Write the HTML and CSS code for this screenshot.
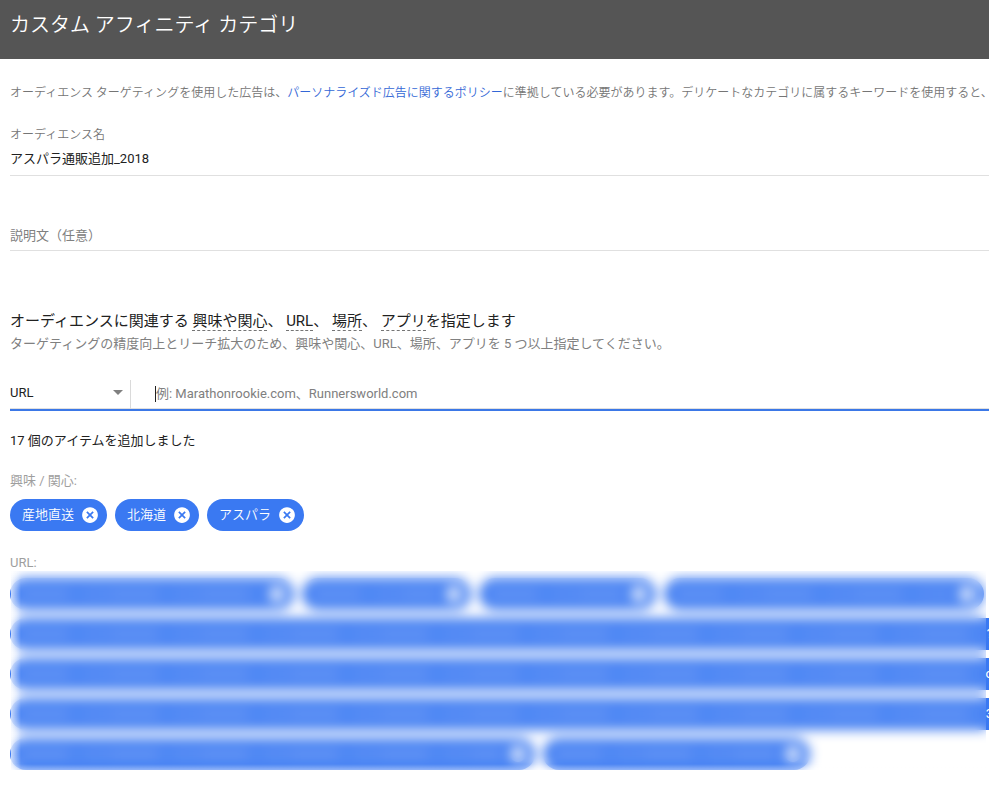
FILE: index.html
```html
<!DOCTYPE html>
<html lang="ja">
<head>
    <meta charset="UTF-8">
    <meta name="viewport" content="width=device-width, initial-scale=1.0">
    <title>カスタム アフィニティ カテゴリ</title>
    <link rel="stylesheet" href="styles.css">
</head>
<body>

    <svg class="defs" width="0" height="0" aria-hidden="true">
        <symbol id="icon-remove" viewBox="0 0 24 24">
            <path fill="currentColor" d="M12 1.5C6.2 1.5 1.5 6.2 1.5 12S6.2 22.5 12 22.5 22.5 17.8 22.5 12 17.8 1.5 12 1.5zm5 13.9L15.4 17 12 13.6 8.6 17 7 15.4 10.4 12 7 8.6 8.6 7 12 10.4 15.4 7 17 8.6 13.6 12z"/>
        </symbol>
    </svg>

    <header class="page-header">
        <h1>カスタム アフィニティ カテゴリ</h1>
    </header>

    <main>
        <p class="notice">オーディエンス ターゲティングを使用した広告は、<a href="#">パーソナライズド広告に関するポリシー</a>に準拠している必要があります。デリケートなカテゴリに属するキーワードを使用すると、</p>

        <form>
            <div class="field">
                <label for="audience-name">オーディエンス名</label>
                <input type="text" id="audience-name" value="アスパラ通販追加_2018">
            </div>

            <div class="field description">
                <input type="text" id="description" placeholder="説明文（任意）" aria-label="説明文（任意）">
            </div>

            <h2>オーディエンスに関連する <span class="term">興味や関心</span>、 <span class="term">URL</span>、 <span class="term">場所</span>、 <span class="term">アプリ</span>を指定します</h2>
            <p class="hint">ターゲティングの精度向上とリーチ拡大のため、興味や関心、URL、場所、アプリを 5 つ以上指定してください。</p>

            <div class="item-input">
                <div class="type-select">
                    <select id="item-type" aria-label="種類">
                        <option>URL</option>
                        <option>興味や関心</option>
                        <option>場所</option>
                        <option>アプリ</option>
                    </select>
                    <svg class="arrow" viewBox="0 0 10 5" aria-hidden="true"><path d="M0 0h10L5 5z"/></svg>
                </div>
                <input type="text" id="item" placeholder="例: Marathonrookie.com、Runnersworld.com" aria-label="URL を追加">
            </div>
        </form>

        <p class="count">17 個のアイテムを追加しました</p>

        <section class="group">
            <h3>興味 / 関心:</h3>
            <div class="chips">
                <span class="chip">産地直送<button type="button" aria-label="産地直送を削除"><svg><use href="#icon-remove"/></svg></button></span>
                <span class="chip">北海道<button type="button" aria-label="北海道を削除"><svg><use href="#icon-remove"/></svg></button></span>
                <span class="chip">アスパラ<button type="button" aria-label="アスパラを削除"><svg><use href="#icon-remove"/></svg></button></span>
            </div>
        </section>

        <section class="group urls">
            <h3>URL:</h3>
            <div class="chips masked">
                <span class="chip"><i class="url" style="width: 239px"></i><button type="button" aria-label="削除"><svg><use href="#icon-remove"/></svg></button></span>
                <span class="chip"><i class="url" style="width: 124px"></i><button type="button" aria-label="削除"><svg><use href="#icon-remove"/></svg></button></span>
                <span class="chip"><i class="url" style="width: 132px"></i><button type="button" aria-label="削除"><svg><use href="#icon-remove"/></svg></button></span>
                <span class="chip"><i class="url" style="width: 275px"></i><button type="button" aria-label="削除"><svg><use href="#icon-remove"/></svg></button></span>
                <span class="chip long"><i class="url"></i><b>?</b></span>
                <span class="chip long"><i class="url"></i><b>o</b></span>
                <span class="chip long"><i class="url"></i><b>3</b></span>
                <span class="chip"><i class="url" style="width: 480px"></i><button type="button" aria-label="削除"><svg><use href="#icon-remove"/></svg></button></span>
                <span class="chip"><i class="url" style="width: 222px"></i><button type="button" aria-label="削除"><svg><use href="#icon-remove"/></svg></button></span>
            </div>
        </section>
    </main>

</body>
</html>
```

FILE: styles.css
```css
* {
    box-sizing: border-box;
}
body {
    margin: 0;
    background-color: white;
    color: #212121;
    font-family: Roboto, "Noto Sans CJK JP", sans-serif;
    font-size: 13px;
    line-height: 20px;
    overflow-x: hidden;
}
h1, h2, h3, p {
    margin: 0;
    font-weight: normal;
}
input, select {
    display: block;
    width: 100%;
    margin: 0;
    padding: 0;
    border: none;
    border-radius: 0;
    background: none;
    color: #212121;
    font: inherit;
    outline: none;
}
input::placeholder {
    color: #808080;
    opacity: 1;
}
.defs {
    position: absolute;
}
.page-header {
    padding: 11px 10px 20px;
    background-color: #555;
    color: white;
}
.page-header h1 {
    font-size: 20px;
    font-weight: 350;
    line-height: 28px;
}
main {
    padding: 24px 0 24px 10px;
}
.notice {
    overflow: hidden;
    color: #757575;
    font-size: 12px;
    font-weight: 350;
    white-space: nowrap;
}
.notice a {
    color: #3367d6;
    text-decoration: none;
}
.field {
    margin-top: 22px;
    border-bottom: 1px solid #e0e0e0;
}
.field label {
    display: block;
    margin-bottom: 3px;
    color: #757575;
    font-size: 12px;
    font-weight: 350;
}
.field input {
    height: 27px;
    padding-bottom: 9px;
}
.description {
    margin-top: 47px;
}
.description input {
    padding-bottom: 3px;
}
h2 {
    margin-top: 60px;
    font-size: 15px;
}
.term {
    border-bottom: 1px dashed #757575;
}
.hint {
    margin-top: 3px;
    color: #808080;
}

/* type drop-down and item box */
.item-input {
    display: flex;
    align-items: center;
    margin-top: 26px;
    border-bottom: 2px solid #3b78e7;
    box-shadow: inset 0 -1px #e0e0e0;
}
.type-select {
    display: flex;
    align-items: center;
    flex: none;
    width: 121px;
    height: 29px;
    margin-right: 24px;
    padding: 0 7px 4px 0;
    border-right: 1px solid #dadada;
}
.type-select select {
    appearance: none;
    height: 20px;
}
.arrow {
    flex: none;
    width: 10px;
    height: 5px;
    fill: #808080;
}
.item-input input {
    height: 16px;
    margin-bottom: 2px;
    border-left: 1px solid #212121;
    line-height: 16px;
}
.count {
    margin-top: 20px;
}

/* chips */
.group {
    margin-top: 20px;
}
.group h3 {
    margin-bottom: 8px;
    color: #9e9e9e;
    font-size: 13px;
}
.urls {
    margin-top: 22px;
}
.urls h3 {
    margin-bottom: 5px;
}
.chips {
    display: flex;
    flex-wrap: wrap;
    gap: 8px;
}
.chip {
    display: flex;
    align-items: center;
    gap: 7px;
    height: 32px;
    padding: 0 8px 0 12px;
    border-radius: 16px;
    background-color: #3a79f2;
    color: white;
    font-weight: 350;
}
.chip button {
    width: 18px;
    height: 18px;
    padding: 0;
    border: none;
    background: none;
    color: white;
    cursor: pointer;
}
.chip svg {
    display: block;
    width: 18px;
    height: 18px;
}
.chip .url {
    height: 10px;
    background: repeating-linear-gradient(90deg, rgba(255, 255, 255, 0.14) 0 46px, rgba(255, 255, 255, 0.06) 46px 64px, rgba(255, 255, 255, 0.1) 64px 90px);
}
.chip.long {
    width: 100%;
    padding-right: 0;
    border-radius: 16px 0 0 16px;
    overflow: hidden;
}
.chip.long .url {
    flex: 1;
}
.chip.long b {
    margin-right: -4px;
    font-weight: normal;
}
.masked {
    position: relative;
}
/* hides the addresses, fading out at the left and bottom edges */
.masked::after {
    content: "";
    position: absolute;
    top: -7px;
    right: 3px;
    bottom: 0;
    left: 1px;
    background:
        linear-gradient(90deg, rgba(255, 255, 255, 0.7), transparent 10px),
        linear-gradient(0deg, rgba(255, 255, 255, 0.4), transparent 6px),
        rgba(255, 255, 255, 0.08);
    backdrop-filter: blur(6px);
}
```
